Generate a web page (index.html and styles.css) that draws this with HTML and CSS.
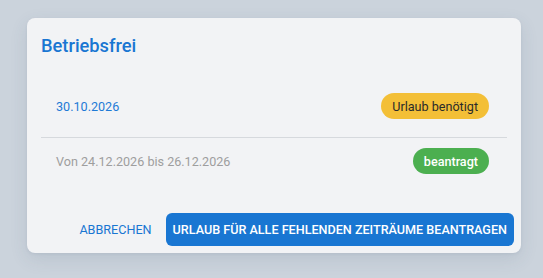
FILE: index.html
```html
<!DOCTYPE html>
<html lang="de">
<head>
<meta charset="utf-8">
<link rel="stylesheet" href="styles.css">
</head>
<body>
<div class="card">
  <h2 class="title">Betriebsfrei</h2>
  <div class="list">
    <div class="row">
      <span class="date">30.10.2026</span>
      <span class="badge badge-warn">Urlaub benötigt</span>
    </div>
    <div class="divider"></div>
    <div class="row row-second">
      <span class="range">Von 24.12.2026 bis 26.12.2026</span>
      <span class="badge badge-ok">beantragt</span>
    </div>
  </div>
  <div class="actions">
    <button class="btn btn-text">Abbrechen</button>
    <button class="btn btn-primary">Urlaub für alle fehlenden Zeiträume beantragen</button>
  </div>
</div>
</body>
</html>
```
FILE: styles.css
```css
html, body {
  margin: 0;
  padding: 0;
}
body {
  background: #cbd3dc;
  font-family: Roboto, "Liberation Sans", sans-serif;
  width: 543px;
  height: 278px;
  overflow: hidden;
}
.card {
  margin: 18px 0 0 27px;
  width: 494px;
  box-sizing: border-box;
  background: #f2f3f5;
  border-radius: 8px;
  padding: 16px 7px 7px 14px;
  box-shadow: 0 6px 18px rgba(60, 80, 110, 0.12), 0 1px 3px rgba(60, 80, 110, 0.08);
}
.title {
  margin: 0;
  font-size: 18.3px;
  font-weight: 500;
  line-height: 24px;
  color: #1976d2;
}
.list {
  margin: 23px 7px 0 0;
}
.row {
  display: flex;
  align-items: center;
  justify-content: space-between;
  padding: 12px 18px 12px 15px;
}
.row-second {
  padding-top: 10px;
  padding-bottom: 10px;
}
.date {
  font-size: 12.6px;
  color: #1e7ad6;
}
.range {
  font-size: 12.6px;
  color: #9e9e9e;
}
.divider {
  margin-top: 6px;
  height: 1px;
  background: #d6d9dd;
}
.badge {
  display: inline-flex;
  align-items: center;
  height: 26px;
  padding: 0 11px;
  border-radius: 13px;
  font-size: 12.6px;
}
.badge-warn {
  background: #f3bf37;
  color: #2a2a2a;
}
.badge-ok {
  background: #4caf50;
  color: #ffffff;
  font-weight: 500;
}
.actions {
  display: flex;
  justify-content: flex-end;
  align-items: center;
  gap: 7px;
  margin-top: 29px;
}
.btn {
  font-family: Roboto, "Liberation Sans", sans-serif;
  font-size: 12.6px;
  font-weight: 500;
  text-transform: uppercase;
  border: none;
  border-radius: 6px;
  height: 33px;
  padding: 0 7px;
  cursor: pointer;
}
.btn-text {
  background: transparent;
  color: #1976d2;
  font-weight: 400;
}
.btn-primary {
  background: #1976d2;
  color: #ffffff;
}
```
